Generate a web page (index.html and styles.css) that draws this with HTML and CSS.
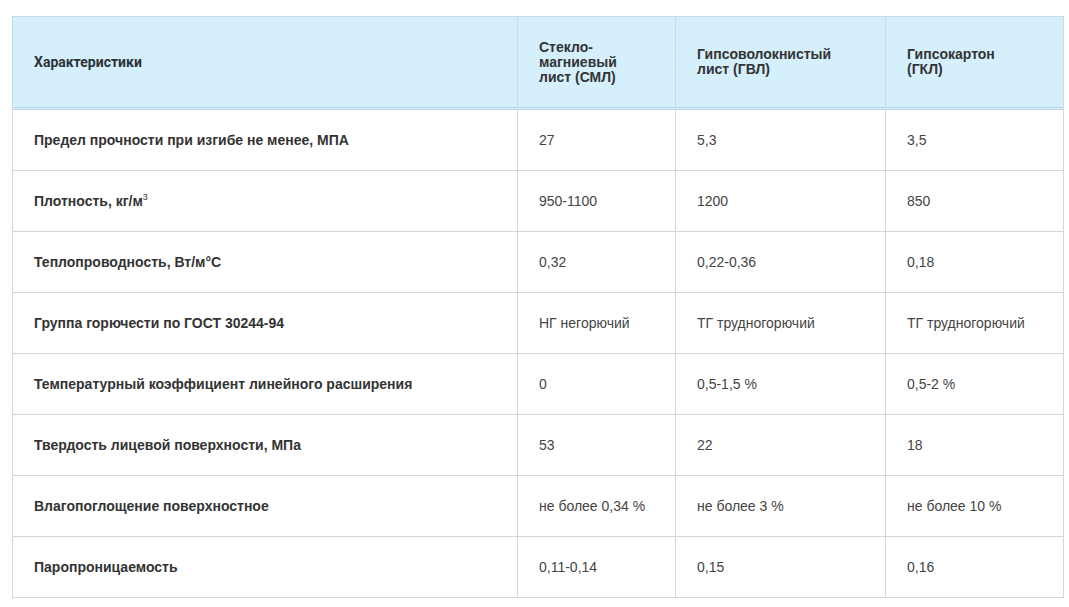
FILE: index.html
```html
<!DOCTYPE html>
<html lang="ru">
<head>
<meta charset="utf-8">
<link rel="stylesheet" href="styles.css">
</head>
<body>
<table class="spec">
  <colgroup>
    <col class="c1"><col class="c2"><col class="c3"><col class="c4">
  </colgroup>
  <thead>
    <tr>
      <th class="first">Характеристики</th>
      <th>Стекло-<br>магниевый<br>лист (СМЛ)</th>
      <th>Гипсоволокнистый<br>лист (ГВЛ)</th>
      <th>Гипсокартон<br>(ГКЛ)</th>
    </tr>
  </thead>
  <tbody>
    <tr><td class="label">Предел прочности при изгибе не менее, МПА</td><td>27</td><td>5,3</td><td>3,5</td></tr>
    <tr><td class="label">Плотность, кг/м<sup>3</sup></td><td>950-1100</td><td>1200</td><td>850</td></tr>
    <tr><td class="label">Теплопроводность, Вт/м°С</td><td>0,32</td><td>0,22-0,36</td><td>0,18</td></tr>
    <tr><td class="label">Группа горючести по ГОСТ 30244-94</td><td>НГ негорючий</td><td>ТГ трудногорючий</td><td>ТГ трудногорючий</td></tr>
    <tr><td class="label">Температурный коэффициент линейного расширения</td><td>0</td><td>0,5-1,5 %</td><td>0,5-2 %</td></tr>
    <tr><td class="label">Твердость лицевой поверхности, МПа</td><td>53</td><td>22</td><td>18</td></tr>
    <tr><td class="label">Влагопоглощение поверхностное</td><td>не более 0,34 %</td><td>не более 3 %</td><td>не более 10 %</td></tr>
    <tr><td class="label">Паропроницаемость</td><td>0,11-0,14</td><td>0,15</td><td>0,16</td></tr>
  </tbody>
</table>
</body>
</html>
```
FILE: styles.css
```css
html, body {
  margin: 0;
  padding: 0;
  background: #ffffff;
}
body {
  font-family: "Liberation Sans", Arial, sans-serif;
  font-size: 14px;
  color: #444444;
}
.spec {
  margin: 16px 0 0 12px;
  width: 1051px;
  border-collapse: collapse;
  table-layout: fixed;
}
.c1 { width: 505px; }
.c2 { width: 158px; }
.c3 { width: 210px; }
.c4 { width: 178px; }
.spec th {
  background: #d5effc;
  border: 1px solid #c4dcea;
  border-bottom: 3px double #bcd5e3;
  height: 90px;
  padding: 0 16px 0 21px;
  text-align: left;
  vertical-align: middle;
  font-weight: bold;
  line-height: 15px;
  color: #333333;
}
.spec th.first {
  font-family: Roboto, "Liberation Sans", sans-serif;
  font-size: 14px;
  font-weight: 700;
  color: #2e3338;
}
.spec td {
  border: 1px solid #d6d6d6;
  height: 60px;
  padding: 0 16px 0 21px;
  vertical-align: middle;
  line-height: 16px;
}
.spec td.label {
  font-weight: bold;
  color: #333333;
}
sup {
  font-size: 9px;
  line-height: 0;
  vertical-align: 6px;
  font-weight: normal;
}
```
